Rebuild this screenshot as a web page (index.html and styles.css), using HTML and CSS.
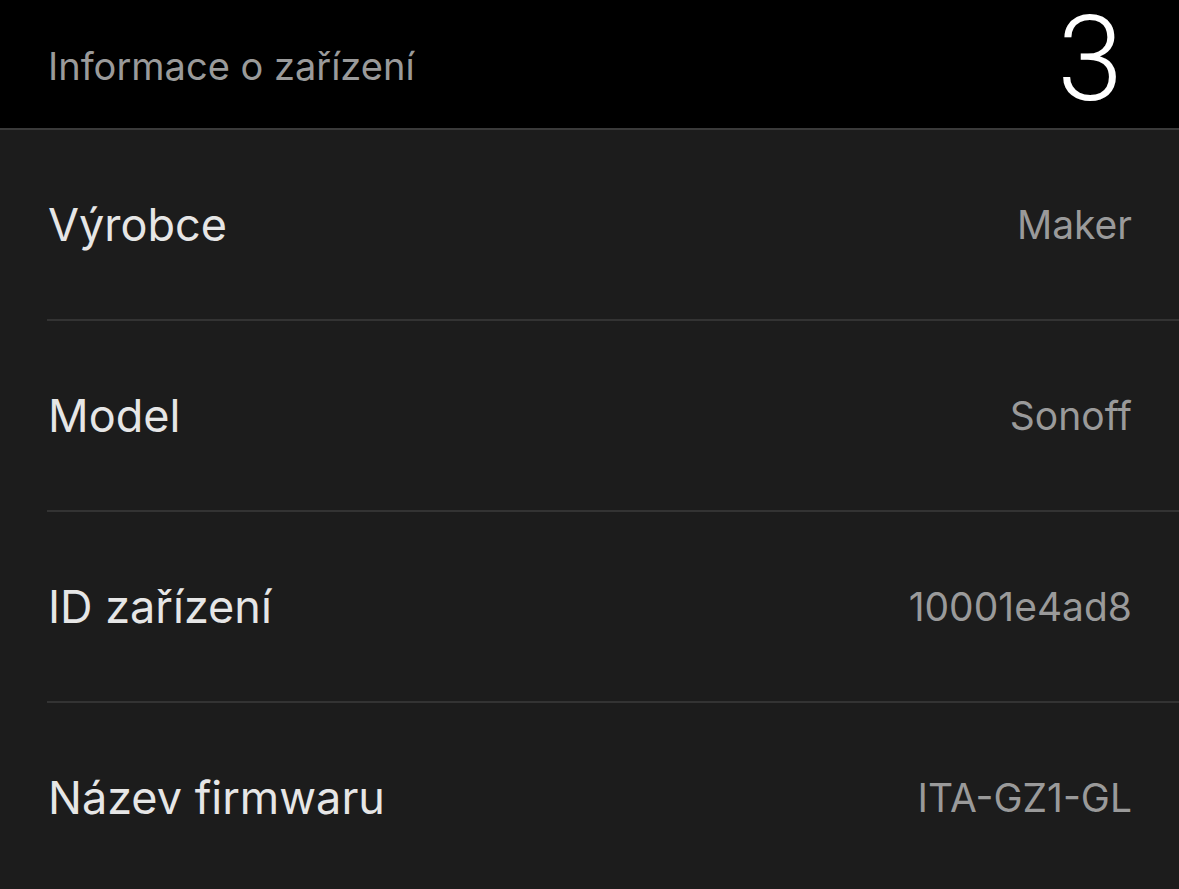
FILE: index.html
```html
<!DOCTYPE html>
<html lang="cs">

<head>
    <meta charset="UTF-8">
    <meta name="viewport" content="width=device-width, initial-scale=1.0">
    <title>Informace o zařízení</title>
    <link rel="stylesheet" href="styles.css">
</head>

<body>
    <div class="header">
        <span class="header-title">Informace o zařízení</span>
        <span class="header-count">3</span>
    </div>
    <div class="info-list">
        <div class="info-row">
            <span class="info-label">Výrobce</span>
            <span class="info-value">Maker</span>
        </div>
        <div class="info-row">
            <span class="info-label">Model</span>
            <span class="info-value">Sonoff</span>
        </div>
        <div class="info-row">
            <span class="info-label">ID zařízení</span>
            <span class="info-value">10001e4ad8</span>
        </div>
        <div class="info-row">
            <span class="info-label">Název firmwaru</span>
            <span class="info-value">ITA-GZ1-GL</span>
        </div>
    </div>
</body>

</html>
```

FILE: styles.css
```css
html,
body {
    margin: 0;
    padding: 0;
    height: 100%;
    background-color: #1c1c1c;
    font-family: Inter, Roboto, sans-serif;
    overflow: hidden;
}

.header {
    height: 128px;
    background-color: #000;
    border-bottom: 2px solid #3a3a3a;
    display: flex;
    align-items: center;
    justify-content: space-between;
    padding: 0 56px 0 48px;
}

.header-title {
    color: #9a9a9a;
    font-size: 38px;
    margin-top: 4px;
}

.header-count {
    color: #fff;
    font-family: Roboto, sans-serif;
    font-size: 118px;
    font-weight: 300;
    line-height: 120px;
    padding-bottom: 8px;
}

.info-list {
    padding-left: 47px;
}

.info-row {
    height: 189px;
    display: flex;
    align-items: center;
    justify-content: space-between;
    padding-right: 47px;
    border-bottom: 2px solid #333;
}

.info-row:last-child {
    border-bottom: none;
}

.info-label {
    color: #e6e6e6;
    font-size: 45px;
    margin-left: 1px;
}

.info-value {
    color: #9a9a9a;
    font-size: 39px;
}
```
